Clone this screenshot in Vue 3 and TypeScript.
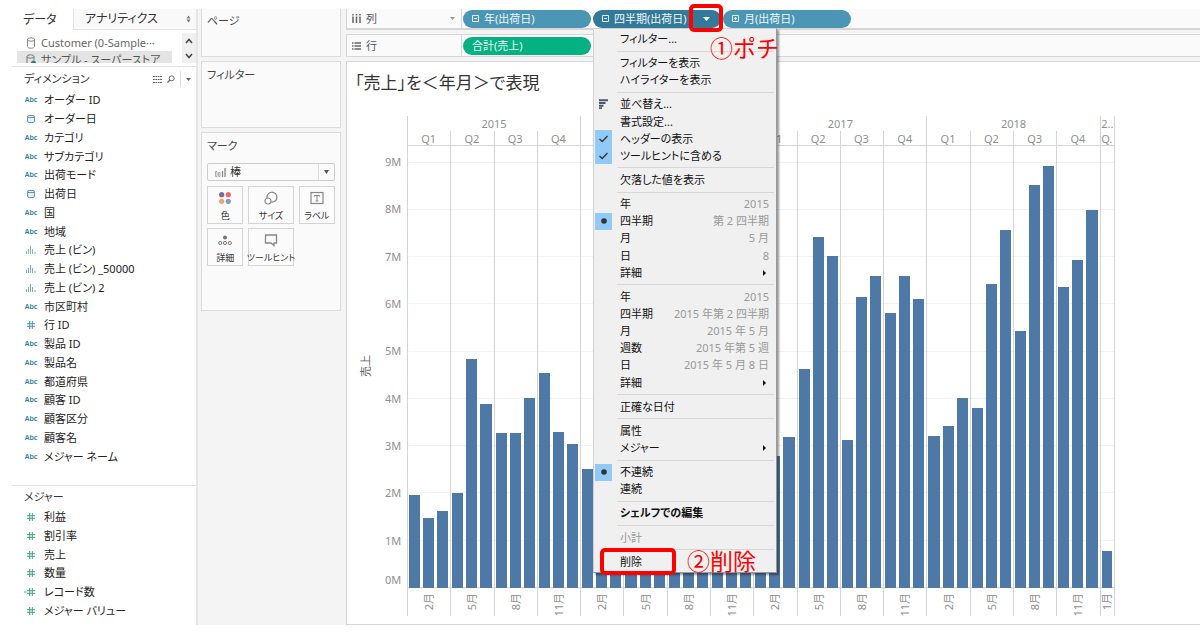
<script setup lang="ts">
import { ref } from 'vue'

type FieldKind = 'abc' | 'date' | 'bin-green' | 'bin' | 'hash' | 'hash-green' | 'count'
interface Field { name: string; kind: FieldKind }

const dimensions: Field[] = [
  { name: 'オーダー ID', kind: 'abc' },
  { name: 'オーダー日', kind: 'date' },
  { name: 'カテゴリ', kind: 'abc' },
  { name: 'サブカテゴリ', kind: 'abc' },
  { name: '出荷モード', kind: 'abc' },
  { name: '出荷日', kind: 'date' },
  { name: '国', kind: 'abc' },
  { name: '地域', kind: 'abc' },
  { name: '売上 (ビン)', kind: 'bin-green' },
  { name: '売上 (ビン) _50000', kind: 'bin' },
  { name: '売上 (ビン) 2', kind: 'bin' },
  { name: '市区町村', kind: 'abc' },
  { name: '行 ID', kind: 'hash' },
  { name: '製品 ID', kind: 'abc' },
  { name: '製品名', kind: 'abc' },
  { name: '都道府県', kind: 'abc' },
  { name: '顧客 ID', kind: 'abc' },
  { name: '顧客区分', kind: 'abc' },
  { name: '顧客名', kind: 'abc' },
  { name: 'メジャー ネーム', kind: 'abc' },
]

const measures: Field[] = [
  { name: '利益', kind: 'hash-green' },
  { name: '割引率', kind: 'hash-green' },
  { name: '売上', kind: 'hash-green' },
  { name: '数量', kind: 'hash-green' },
  { name: 'レコード数', kind: 'count' },
  { name: 'メジャー バリュー', kind: 'hash-green' },
]

const markType = ref('棒')

interface MenuItem {
  label: string
  hint?: string
  mark?: 'check' | 'dot' | 'sort'
  sub?: boolean
  strong?: boolean
  disabled?: boolean
  boxed?: boolean
}

const menuGroups: MenuItem[][] = [
  [{ label: 'フィルター...' }],
  [{ label: 'フィルターを表示' }, { label: 'ハイライターを表示' }],
  [
    { label: '並べ替え...', mark: 'sort' },
    { label: '書式設定...' },
    { label: 'ヘッダーの表示', mark: 'check' },
    { label: 'ツールヒントに含める', mark: 'check' },
  ],
  [{ label: '欠落した値を表示' }],
  [
    { label: '年', hint: '2015' },
    { label: '四半期', hint: '第 2 四半期', mark: 'dot' },
    { label: '月', hint: '5 月' },
    { label: '日', hint: '8' },
    { label: '詳細', sub: true },
  ],
  [
    { label: '年', hint: '2015' },
    { label: '四半期', hint: '2015 年第 2 四半期' },
    { label: '月', hint: '2015 年 5 月' },
    { label: '週数', hint: '2015 年第 5 週' },
    { label: '日', hint: '2015 年 5 月 8 日' },
    { label: '詳細', sub: true },
  ],
  [{ label: '正確な日付' }],
  [{ label: '属性' }, { label: 'メジャー', sub: true }],
  [{ label: '不連続', mark: 'dot' }, { label: '連続' }],
  [{ label: 'シェルフでの編集', strong: true }],
  [{ label: '小計', disabled: true }],
  [{ label: '削除', boxed: true }],
]

interface Quarter { label: string; month: string; values: number[] }
interface Year { label: string; quarters: Quarter[] }

const AXIS_MAX = 9.34
const monthLabels = ['2月', '5月', '8月', '11月']

function makeYear(label: string, values: number[]): Year {
  return {
    label,
    quarters: monthLabels.map((month, i) => ({
      label: `Q${i + 1}`,
      month,
      values: values.slice(i * 3, i * 3 + 3),
    })),
  }
}

const years: Year[] = [
  makeYear('2015', [1.96, 1.49, 1.63, 2.0, 4.84, 3.89, 3.28, 3.27, 4.01, 4.55, 3.3, 3.04]),
  makeYear('2016', [2.52, 2.3, 2.9, 3.1, 4.9, 4.6, 3.4, 4.1, 4.8, 4.4, 4.7, 5.2]),
  makeYear('2017', [2.9, 2.8, 3.2, 4.62, 7.42, 7.01, 3.12, 6.16, 6.59, 5.81, 6.59, 6.1]),
  makeYear('2018', [3.21, 3.43, 4.01, 3.81, 6.42, 7.56, 5.43, 8.51, 8.92, 6.36, 6.94, 7.99]),
  { label: '2..', quarters: [{ label: 'Q.', month: '1月', values: [0.78] }] },
]

const monthCount = (y: Year) => y.quarters.reduce((n, q) => n + q.values.length, 0)
const ticks = [9, 8, 7, 6, 5, 4, 3, 2, 1]
</script>

<template>
  <div class="app">
    <aside class="data-pane">
      <div class="tabs">
        <button class="tab active" type="button">データ</button>
        <button class="tab" type="button">
          アナリティクス
          <svg width="5" height="8" viewBox="0 0 5 8"><path d="M2.5 0.5L4.5 3.5H.5ZM2.5 7.5L.5 4.5H4.5Z" fill="#6b7a8c" /></svg>
        </button>
      </div>
      <div class="sources">
        <ul class="source-list">
          <li>
            <svg width="10" height="12" viewBox="0 0 10 12" fill="none" stroke="#888"><ellipse cx="5" cy="2.5" rx="3.5" ry="1.7" /><path d="M1.5 2.5V9.5C1.5 11.8 8.5 11.8 8.5 9.5V2.5" /></svg>
            Customer (0-Sample···
          </li>
          <li class="selected">
            <svg width="10" height="12" viewBox="0 0 10 12" fill="none" stroke="#777"><ellipse cx="4.5" cy="2.5" rx="3.5" ry="1.7" /><path d="M1 2.5V9.5C1 11 4 11.2 5 11M8 2.5V6" /><circle cx="7.5" cy="9" r="2.5" fill="#2e7d9e" stroke="none" /></svg>
            サンプル - スーパーストア
          </li>
        </ul>
        <div class="scroller">
          <button type="button" aria-label="上へ"><svg width="8" height="6" viewBox="0 0 8 6"><path d="M1 5L4 1.5L7 5" fill="none" stroke="#444" stroke-width="1.5" /></svg></button>
          <button type="button" aria-label="下へ"><svg width="8" height="6" viewBox="0 0 8 6"><path d="M1 1L4 4.5L7 1" fill="none" stroke="#444" stroke-width="1.5" /></svg></button>
        </div>
      </div>
      <div class="pane-head">
        <h2>ディメンション</h2>
        <div class="tools">
          <button type="button" aria-label="表示"><svg width="9" height="7" viewBox="0 0 9 7"><path d="M0 .5H9M0 3.5H9M0 6.5H9" stroke="#555" stroke-dasharray="1.7 .7" /></svg></button>
          <button type="button" aria-label="検索"><svg width="8" height="8" viewBox="0 0 8 8" fill="none" stroke="#666"><circle cx="4.7" cy="3.3" r="2.5" /><path d="M3 5L.5 7.5" stroke-width="1.2" /></svg></button>
          <button type="button" class="more" aria-label="メニュー"><svg width="5" height="3" viewBox="0 0 5 3"><path d="M0 0H5L2.5 3Z" fill="#666" /></svg></button>
        </div>
      </div>
      <ul class="fields dims">
        <li v-for="f in dimensions" :key="f.name">
          <span class="kind">
            <span v-if="f.kind === 'abc'" class="abc">Abc</span>
            <svg v-else-if="f.kind === 'date'" width="8" height="8" viewBox="0 0 8 8"><rect x=".5" y=".5" width="7" height="7" rx="1.5" fill="#e8f2f6" stroke="#5a9ab1" /><path d="M.5 2.5H7.5" stroke="#5a9ab1" /></svg>
            <svg v-else-if="f.kind === 'hash'" width="8" height="8" viewBox="0 0 8 8"><path d="M0 2.7H8M0 5.3H8M2.7 0V8M5.3 0V8" stroke="#4a94ab" /></svg>
            <svg v-else width="10" height="8" viewBox="0 0 10 8"><path d="M.5 5V8M2.500 3V8M4.500 0V8M6.500 3V8M9 6V8" :stroke="f.kind === 'bin' ? '#7faabf' : '#7cc2a0'" /></svg>
          </span>
          {{ f.name }}
        </li>
      </ul>
      <div class="pane-head measures-head"><h2>メジャー</h2></div>
      <ul class="fields meas">
        <li v-for="f in measures" :key="f.name">
          <span class="kind">
            <svg v-if="f.kind === 'count'" class="count" width="11" height="8" viewBox="0 0 11 8"><path d="M3 2.7H11M3 5.3H11M5.7 0V8M8.3 0V8M0 4H2.5" stroke="#3aa57c" /></svg>
            <svg v-else width="8" height="8" viewBox="0 0 8 8"><path d="M0 2.7H8M0 5.3H8M2.7 0V8M5.3 0V8" stroke="#3aa57c" /></svg>
          </span>
          {{ f.name }}
        </li>
      </ul>
    </aside>

    <section class="cards">
      <div class="card pages"><h3>ページ</h3></div>
      <div class="card filters"><h3>フィルター</h3></div>
      <div class="card marks">
        <h3 id="marks-title">マーク</h3>
        <div class="mark-select">
          <svg width="11" height="9" viewBox="0 0 11 9"><path d="M.5 3.5h1.5v5H.5zM3.5 4.5h1.5v4H3.5z" fill="none" stroke="#999" stroke-width=".8" /><path d="M7.5 3V9M10 0V9" stroke="#888" stroke-width="1.3" /></svg>
          <select v-model="markType" aria-labelledby="marks-title">
            <option>棒</option>
          </select>
          <span class="caret"><svg width="5" height="4" viewBox="0 0 5 4"><path d="M0 0H5L2.5 4Z" fill="#555" /></svg></span>
        </div>
        <div class="mark-grid">
          <button type="button">
            <svg width="14" height="14" viewBox="0 0 14 14"><circle cx="3.7" cy="3.7" r="2.6" fill="#7b6a98" /><circle cx="10.3" cy="3.7" r="2.6" fill="#f0647a" /><circle cx="3.7" cy="10.3" r="2.6" fill="#f2a06c" /><circle cx="10.3" cy="10.3" r="2.6" fill="#76a0c8" /></svg>
            <span>色</span>
          </button>
          <button type="button">
            <svg width="14" height="14" viewBox="0 0 14 14" fill="none" stroke="#888" stroke-width="1.2"><path d="M3 7A5 5 0 1 1 7.5 11.2" /><circle cx="4" cy="10" r="3" /></svg>
            <span>サイズ</span>
          </button>
          <button type="button">
            <svg width="14" height="14" viewBox="0 0 14 14" fill="none" stroke="#888"><rect x="1" y="1.5" width="12" height="11" stroke-width="1.2" /><path d="M4.5 5.5V4.5H9.5V5.5M7 4.5V10M5.5 10H8.5" /></svg>
            <span>ラベル</span>
          </button>
          <button type="button">
            <svg width="14" height="14" viewBox="0 0 14 14" fill="none" stroke="#777"><circle cx="7" cy="4.5" r="2" fill="#777" stroke="none" /><circle cx="2.2" cy="10" r="1.6" /><circle cx="7" cy="10" r="1.6" /><circle cx="11.8" cy="10" r="1.6" /></svg>
            <span>詳細</span>
          </button>
          <button type="button">
            <svg width="14" height="14" viewBox="0 0 14 14" fill="none" stroke="#888" stroke-width="1.3"><path d="M1.5 2H12.5V10H10V12.5L7 10H1.5Z" /></svg>
            <span>ツールヒント</span>
          </button>
        </div>
      </div>
    </section>

    <main class="work">
      <div class="shelf columns">
        <div class="shelf-name">
          <svg width="9" height="9" viewBox="0 0 9 9"><path d="M1 0V1.5M4.5 0V1.5M8 0V1.5M1 2.5V9M4.5 2.5V9M8 2.5V9" stroke="#666" stroke-width="1.5" /></svg>
          列
          <svg class="shelf-caret" width="5" height="3" viewBox="0 0 5 3"><path d="M0 0H5L2.5 3Z" fill="#999" /></svg>
        </div>
        <div class="pills">
          <button class="pill" type="button">
            <svg width="7" height="7" viewBox="0 0 7 7"><path d="M.5 .5H6.5V6.5H.5ZM2 3.5H5" fill="none" stroke="#e2eff5" /></svg>
            年(出荷日)
          </button>
          <div class="pill-anchor">
            <button class="pill open" type="button" aria-haspopup="menu" aria-expanded="true">
              <svg width="7" height="7" viewBox="0 0 7 7"><path d="M.5 .5H6.5V6.5H.5ZM2 3.5H5" fill="none" stroke="#e2eff5" /></svg>
              四半期(出荷日)
              <svg class="pill-caret" width="7" height="4" viewBox="0 0 7 4"><path d="M0 0H7L3.5 4Z" fill="#fff" /></svg>
            </button>
            <div class="menu" role="menu">
              <template v-for="(group, g) in menuGroups" :key="g">
                <div v-if="g > 0" class="sep" role="separator"></div>
                <button
                  v-for="item in group"
                  :key="item.label"
                  class="item"
                  :class="{ strong: item.strong, off: item.disabled }"
                  type="button"
                  role="menuitem"
                  :disabled="item.disabled"
                >
                  <span class="mark" :class="{ on: item.mark === 'check' || item.mark === 'dot' }">
                    <svg v-if="item.mark === 'check'" width="9" height="8" viewBox="0 0 9 8"><path d="M.5 4L3.2 6.5L8.5 1" fill="none" stroke="#333" stroke-width="1.3" /></svg>
                    <svg v-else-if="item.mark === 'dot'" width="6" height="6" viewBox="0 0 6 6"><circle cx="3" cy="3" r="2.8" fill="#333" /></svg>
                    <svg v-else-if="item.mark === 'sort'" width="9" height="10" viewBox="0 0 9 10"><path d="M0 1.2H9M0 4H6.5M0 6.7H4.5M0 9.2H3" stroke="#4a5a6a" stroke-width="1.9" /></svg>
                  </span>
                  <span class="label">{{ item.label }}</span>
                  <span v-if="item.hint" class="hint">{{ item.hint }}</span>
                  <svg v-if="item.sub" class="sub" width="3" height="6" viewBox="0 0 3 6"><path d="M0 0L3 3L0 6Z" fill="#111" /></svg>
                  <template v-if="item.boxed">
                    <span class="red-box delete-box"></span>
                    <span class="note delete-note">②削除</span>
                  </template>
                </button>
              </template>
            </div>
            <span class="red-box caret-box"></span>
            <span class="note caret-note">①ポチ</span>
          </div>
          <button class="pill" type="button">
            <svg width="7" height="7" viewBox="0 0 7 7"><path d="M.5 .5H6.5V6.5H.5ZM2 3.5H5M3.5 2V5" fill="none" stroke="#e2eff5" /></svg>
            月(出荷日)
          </button>
        </div>
      </div>

      <div class="shelf rows">
        <div class="shelf-name">
          <svg width="9" height="8" viewBox="0 0 9 8"><path d="M0 1H1.5M0 4H1.5M0 7H1.5M2.5 1H9M2.5 4H9M2.5 7H9" stroke="#666" stroke-width="1.4" /></svg>
          行
        </div>
        <div class="pills">
          <button class="pill green" type="button">合計(売上)</button>
        </div>
      </div>

      <div class="sheet">
        <h1>「売上」を＜年月＞で表現</h1>
        <div class="viz">
          <div class="axis-title"><span>売上</span></div>
          <div class="axis">
            <div class="axis-top"></div>
            <div v-for="t in ticks" :key="t" class="tick">
              <span>{{ t }}M</span>
              <span v-if="t === 1" class="zero">0M</span>
            </div>
          </div>
          <div class="chart">
            <div class="grid-lines">
              <div class="axis-top"></div>
              <div v-for="t in ticks" :key="t" class="band"></div>
            </div>
            <div class="years">
              <div v-for="y in years" :key="y.label" class="year" :style="{ flexGrow: monthCount(y) }">
                <div class="year-label">{{ y.label }}</div>
                <div class="quarters">
                  <div v-for="q in y.quarters" :key="q.label" class="quarter" :style="{ flexGrow: q.values.length }">
                    <div class="q-label">{{ q.label }}</div>
                    <div class="bars">
                      <div v-for="(v, i) in q.values" :key="i" class="slot">
                        <div class="bar" :style="{ height: (v / AXIS_MAX) * 100 + '%' }"></div>
                      </div>
                    </div>
                    <div class="m-label"><span>{{ q.month }}</span></div>
                  </div>
                </div>
              </div>
            </div>
          </div>
        </div>
      </div>
    </main>
  </div>
</template>

<style>
body {
  background: #fff;
}
</style>

<style scoped>
* {
  box-sizing: border-box;
}
.app {
  display: flex;
  min-height: 616px;
  margin: 9px 0 7px 12px;
  background: #f4f4f4;
  color: #333;
  font-family: "Noto Sans", "Noto Sans CJK JP", sans-serif;
  font-size: 11px;
  line-height: 16px;
  font-feature-settings: "palt";
}
button,
select {
  font: inherit;
  font-feature-settings: inherit;
  color: inherit;
  background: none;
  border: 0;
  padding: 0;
  margin: 0;
}
h1, h2, h3, ul {
  margin: 0;
  padding: 0;
  font-weight: 400;
  list-style: none;
}
svg {
  display: block;
  flex: none;
}

/* data pane */
.data-pane {
  display: flex;
  flex-direction: column;
  flex: none;
  width: 186px;
  background: #fff;
  border-right: 2px solid #e6e6e6;
}
.tabs {
  display: flex;
  height: 21px;
  font-size: 12px;
}
.tab {
  display: flex;
  align-items: center;
  justify-content: space-between;
  flex: 1;
  padding: 0 5px 0 11px;
  background: #f9f9f9;
  border-left: 1px solid #e4e4e4;
  border-bottom: 1px solid #e4e4e4;
}
.tab.active {
  flex: none;
  width: 61px;
  background: #fff;
  border: 0;
}
.sources {
  display: flex;
  height: 33px;
  margin-top: 3px;
}
.source-list {
  flex: 1;
  height: 30px;
  padding: 1px 10px 0 5px;
  overflow: hidden;
  color: #666;
}
.source-list li {
  display: flex;
  align-items: center;
  gap: 5px;
  height: 17px;
  padding-left: 9px;
  white-space: nowrap;
}
.source-list .selected {
  background: #e4e4e4;
  color: #555;
}
.scroller {
  display: flex;
  flex-direction: column;
  width: 14px;
  height: 30px;
  background: #f0f0f0;
}
.scroller button {
  display: flex;
  flex: 1;
  align-items: center;
  justify-content: center;
}
.pane-head {
  display: flex;
  align-items: center;
  justify-content: space-between;
  height: 25px;
  padding-left: 12px;
  border-top: 1px solid #e2e2e2;
}
.pane-head h2 {
  font-size: 11px;
}
.tools {
  display: flex;
  align-items: center;
  gap: 5px;
}
.tools .more {
  display: flex;
  align-items: center;
  justify-content: center;
  width: 16px;
  height: 16px;
  border-left: 1px solid #ddd;
}
.fields {
  display: flex;
  flex-direction: column;
}
.dims {
  height: 375px;
}
.meas {
  height: 112px;
}
.measures-head {
  height: 23px;
  margin-top: 19px;
}
.fields li {
  display: flex;
  flex: 1;
  align-items: center;
  color: #222;
  white-space: nowrap;
}
.kind {
  display: flex;
  justify-content: center;
  width: 14px;
  margin: 0 6px 0 12px;
}
.count {
  margin-right: 3px;
}
.abc {
  color: #2f7f9d;
  font-size: 7px;
  font-weight: 600;
}

/* cards */
.cards {
  display: flex;
  flex-direction: column;
  gap: 4px;
  flex: none;
  width: 140px;
  margin: 0 5px 0 3px;
}
.card {
  padding: 4px 5px;
  background: #fafafa;
  border: 1px solid #dcdcdc;
}
.card h3 {
  color: #444;
  font-size: 11px;
}
.pages {
  height: 48px;
  border-top: 0;
}
.filters {
  height: 67px;
  padding-top: 5px;
}
.marks {
  height: 179px;
  padding-top: 5px;
}
.mark-select {
  display: flex;
  align-items: center;
  height: 18px;
  margin-top: 9px;
  padding-left: 7px;
  border: 1px solid #ccc;
  border-radius: 2px;
}
.mark-select select {
  flex: 1;
  appearance: none;
  padding-left: 4px;
  outline: 0;
}
.caret {
  display: flex;
  align-items: center;
  justify-content: center;
  width: 16px;
  height: 16px;
  border-left: 1px solid #ddd;
}
.mark-grid {
  display: grid;
  grid-template-columns: minmax(0, 37fr) minmax(0, 46fr) minmax(0, 37fr);
  gap: 4px 5px;
  margin-top: 5px;
}
.mark-grid button {
  display: flex;
  flex-direction: column;
  align-items: center;
  justify-content: space-between;
  height: 38px;
  padding-top: 4px;
  border: 1px solid #d4d4d4;
  background: #fbfbfb;
  font-size: 9px;
  line-height: 15px;
  white-space: nowrap;
}

/* shelves */
.work {
  display: flex;
  flex-direction: column;
  flex: 1;
  min-width: 0;
}
.shelf {
  display: flex;
  height: 23px;
  margin-bottom: 4px;
  background: #fafafa;
  border: 1px solid #d6d6d6;
  border-right: 0;
}
.shelf.columns {
  height: 21px;
  border-top: 0;
  border-bottom-width: 2px;
}
.shelf-name {
  display: flex;
  align-items: center;
  gap: 5px;
  width: 115px;
  padding: 0 6px 0 5px;
  border-right: 1px solid #d6d6d6;
  color: #555;
}
.shelf-caret {
  margin-left: auto;
}
.pills {
  display: flex;
  flex: 1;
  gap: 2px;
  align-items: center;
  padding-left: 1px;
}
.pill {
  display: flex;
  align-items: center;
  gap: 5px;
  width: 128px;
  height: 18px;
  padding: 0 9px;
  border-radius: 9px;
  background: #4a96b4;
  color: #f2f8fb;
  white-space: nowrap;
}
.pill.green {
  background: #03b280;
}
.pill.open {
  background: #32799a;
}
.pill-caret {
  margin-left: auto;
  margin-right: 2px;
}
.pill-anchor {
  position: relative;
  z-index: 2;
}

/* context menu */
.menu {
  position: absolute;
  top: 18px;
  left: 0;
  display: flex;
  flex-direction: column;
  width: 184px;
  height: 545px;
  padding: 2px 2px 1px 1px;
  background: #f0f0f0;
  border: 1px solid #d0d0d0;
  border-right-color: #999;
  border-bottom-color: #999;
  box-shadow: 2px 2px 2px rgba(0, 0, 0, 0.4);
}
.item {
  position: relative;
  display: flex;
  align-items: center;
  flex: 1;
  color: #111;
  text-align: left;
  white-space: nowrap;
}
.item.strong {
  font-weight: 700;
}
.item.off {
  color: #999;
}
.mark {
  display: flex;
  align-items: center;
  justify-content: center;
  align-self: stretch;
  width: 17px;
  margin-right: 8px;
}
.mark.on {
  background: #91c9f7;
}
.label {
  flex: 1;
}
.hint {
  margin-right: 5px;
  color: #999;
}
.sub {
  margin-right: 8px;
}
.sep {
  height: 1px;
  margin: 3px 0 3px 22px;
  background: #d7d7d7;
}

/* annotations */
.red-box {
  position: absolute;
  border: 4px solid #f00;
  border-radius: 5px;
}
.caret-box {
  top: -6px;
  left: 96px;
  width: 34px;
  height: 28px;
}
.delete-box {
  top: -5px;
  left: 5px;
  width: 76px;
  height: 27px;
}
.note {
  position: absolute;
  color: #f00;
  font-size: 23px;
  font-weight: 400;
  line-height: 28px;
  white-space: nowrap;
  font-feature-settings: normal;
}
.caret-note {
  top: 24px;
  left: 117px;
}
.delete-note {
  top: -6px;
  left: 92px;
}

/* sheet */
.sheet {
  display: flex;
  flex-direction: column;
  flex: 1;
  background: #fff;
  border: 1px solid #d6d6d6;
  border-right: 0;
}
h1 {
  padding: 8px 0 0 8px;
  font-size: 17px;
  line-height: 26px;
}
.viz {
  display: flex;
  flex: 1;
  margin-top: 20px;
  padding-bottom: 8px;
  color: #8f8f8f;
}
.axis-title {
  display: flex;
  align-items: center;
  justify-content: center;
  width: 38px;
  color: #666;
}
.axis-title span,
.m-label span {
  writing-mode: vertical-rl;
  text-orientation: sideways;
  transform: rotate(180deg);
  white-space: nowrap;
}
.axis {
  display: flex;
  flex-direction: column;
  width: 22px;
  padding: 30px 6px 28px 0;
  text-align: right;
}
.axis-top {
  flex: 34;
}
.tick {
  display: flex;
  flex: 100;
  flex-direction: column;
  justify-content: space-between;
}
.tick span {
  height: 16px;
  margin-top: -8px;
}
.chart {
  display: grid;
  flex: 1;
  max-width: 708px;
}
.grid-lines,
.years {
  grid-area: 1 / 1;
  display: flex;
}
.grid-lines {
  flex-direction: column;
  margin: 29px 0 28px;
  border-top: 1px solid #d4d4d4;
  border-bottom: 1px solid #d4d4d4;
}
.band {
  flex: 100;
  border-top: 1px solid #f3f3f3;
}
.years {
  border-right: 1px solid #d4d4d4;
}
.year {
  display: flex;
  flex-direction: column;
  flex: 1 1 0;
  min-width: 0;
  text-align: center;
}
.year-label {
  height: 15px;
  border-left: 1px solid #d4d4d4;
  overflow: hidden;
}
.quarters {
  display: flex;
  flex: 1;
}
.quarter {
  display: flex;
  flex-direction: column;
  flex: 1 1 0;
  min-width: 0;
  border-left: 1px solid #d4d4d4;
}
.q-label {
  height: 15px;
  padding-right: 1px;
  overflow: hidden;
}
.bars {
  display: flex;
  flex: 1;
}
.slot {
  display: flex;
  flex: 1;
  align-items: flex-end;
  padding: 0 2px 0 1px;
}
.bar {
  width: 100%;
  background: #4e79a7;
}
.m-label {
  display: flex;
  justify-content: center;
  align-items: flex-start;
  height: 28px;
  padding-top: 5px;
}
</style>
